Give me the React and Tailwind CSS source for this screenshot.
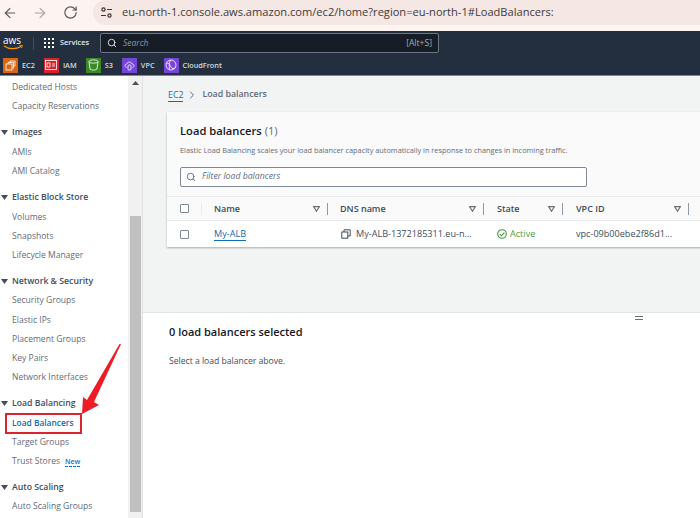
import React from "react";
import { ArrowLeft, ArrowRight, RotateCw, Search, ChevronRight } from "lucide-react";

function SideItem({ children }) {
  return <div className="h-[19.1px] leading-[19.1px] pl-3 text-[8.55px] text-[#5f6b7a] whitespace-nowrap">{children}</div>;
}
function SideHead({ children }) {
  return (
    <div className="flex items-center h-[20.6px] mt-[6px] text-[8.7px] font-semibold text-[#414d5c] whitespace-nowrap">
      <svg width="7" height="5" viewBox="0 0 7 5" className="ml-[1px] mr-[4px]"><path d="M0 0h7L3.5 5z" fill="#414d5c" /></svg>
      {children}
    </div>
  );
}
function ServiceTile({ bg, label, icon }) {
  return (
    <div className="flex items-center gap-[4px]">
      <div className={`w-[15px] h-[15px] flex items-center justify-center ${bg}`}>{icon}</div>
      <span className="text-[7.3px] font-semibold text-[#d5dbdb]">{label}</span>
    </div>
  );
}
function Sort() {
  return <svg width="7" height="6" viewBox="0 0 7 6"><path d="M0.7 0.7h5.6L3.5 5.2z" fill="none" stroke="#687078" strokeWidth="1.2" /></svg>;
}
function HeadCell({ className, label }) {
  return (
    <div className={`flex items-center h-full shrink-0 ${className}`}>
      <span className="text-[9px] font-semibold text-[#414d5c]">{label}</span>
      <span className="ml-auto"><Sort /></span>
      <span className="ml-[7px] w-[1px] h-[12px] bg-[#8d99a8]" />
    </div>
  );
}
function Check() {
  return <span className="block w-[9px] h-[9px] rounded-[1px] border border-[#7d8998] bg-white" />;
}
function CopyGlyph() {
  return (
    <svg width="10" height="10" viewBox="0 0 10 10" fill="none" stroke="#414d5c" strokeWidth="1">
      <rect x="0.8" y="3" width="6" height="6.2" />
      <path d="M3 3V0.8h6.2V7H6.8" />
    </svg>
  );
}

export default function App() {
  return (
    <div className="relative w-[700px] h-[518px] overflow-hidden flex flex-col bg-white font-['Open_Sans','Noto_Sans',sans-serif]">
      {/* Browser bar */}
      <div className="h-[31px] shrink-0 bg-[#fdf4f1] flex items-start">
        <div className="flex items-center h-[25px] ml-[2px] gap-[14px] text-[#5b5552]">
          <ArrowLeft size={16} strokeWidth={1.7} />
          <ArrowRight size={16} strokeWidth={1.7} className="text-[#a8a3a0]" />
          <RotateCw size={15} strokeWidth={1.9} className="ml-[1px]" />
        </div>
        <div className="h-[25px] flex-1 ml-[15px] bg-[#f4e7e4] rounded-l-[13px] flex items-center pl-[7px]">
          <svg width="13" height="13" viewBox="0 0 13 13" fill="none" stroke="#3c3735" strokeWidth="1.2">
            <circle cx="3.5" cy="3.5" r="1.6" /><path d="M7 3.5h5M1 9.5h5" /><circle cx="9.5" cy="9.5" r="1.6" />
          </svg>
          <span className="ml-[9px] text-[11.1px] text-[#3f3a38] whitespace-nowrap">eu-north-1.console.aws.amazon.com/ec2/home?region=eu-north-1#LoadBalancers:</span>
        </div>
      </div>

      {/* AWS nav */}
      <div className="h-[45px] shrink-0 bg-[#232f3e] border-b border-b-[#7d8998] flex flex-col">
        <div className="h-[24px] flex items-center">
          <div className="relative w-[20px] ml-[3px] h-[17px]">
            <span className="block text-[10px] leading-[10px] text-white">aws</span>
            <svg width="20" height="5" viewBox="0 0 20 5" className="absolute left-0 top-[10px]"><path d="M1 1c5 3.5 12 3.5 17 .5" fill="none" stroke="#f90" strokeWidth="1.2" /><path d="M16.5 0.5l3-.2-1 2.7" fill="none" stroke="#f90" strokeWidth="0.9" /></svg>
          </div>
          <span className="ml-[10px] w-[1px] h-[13px] bg-[#414d5c]" />
          <div className="ml-[10px] grid grid-cols-3 gap-[1.5px] w-[10px]">
            {Array.from({ length: 9 }).map((_, i) => <span key={i} className="w-[2.4px] h-[2.4px] bg-white" />)}
          </div>
          <span className="ml-[6px] text-[7.4px] font-semibold text-[#e5e9ea]">Services</span>
          <div className="ml-[11px] w-[339px] h-[20px] bg-[#161d26] border border-[#6b7683] rounded-[2px] flex items-center px-[6px]">
            <Search size={10} strokeWidth={2.4} className="text-[#d5dbdb]" />
            <span className="ml-[6px] text-[8.5px] italic text-[#8d99a8]">Search</span>
            <span className="ml-auto text-[8.6px] text-[#a3adb5]">[Alt+S]</span>
          </div>
        </div>
        <div className="flex-1 flex items-center pl-[3px] gap-[9px]">
          <ServiceTile bg="bg-[#d86613]" label="EC2" icon={
            <svg width="11" height="11" viewBox="0 0 11 11" fill="none" stroke="#fff" strokeWidth="0.8"><rect x="1" y="4" width="6" height="6" /><path d="M3 4V2.5h5.500V8H7M5 2.500V1h5v5H8.500" /></svg>
          } />
          <ServiceTile bg="bg-[#d6242d]" label="IAM" icon={
            <svg width="12" height="10" viewBox="0 0 12 10" fill="none" stroke="#fff" strokeWidth="0.8"><rect x="0.5" y="0.5" width="11" height="9" /><rect x="2" y="3" width="3" height="4" /><path d="M7 4h3M7 6h3" /></svg>
          } />
          <ServiceTile bg="bg-[#3a8a28]" label="S3" icon={
            <svg width="11" height="12" viewBox="0 0 11 12" fill="none" stroke="#fff" strokeWidth="0.8"><ellipse cx="5.500" cy="2.500" rx="4.500" ry="1.700" /><path d="M1 2.500l1 7.500c1 1.400 6 1.400 7 0l1-7.500" /></svg>
          } />
          <ServiceTile bg="bg-[#7545d8]" label="VPC" icon={
            <svg width="11" height="11" viewBox="0 0 11 11" fill="none" stroke="#fff" strokeWidth="0.8"><path d="M2.500 7.500C0.500 7 0.500 4 2.800 4 3.200 1.500 7.500 1.500 8 4c2.500 0 2.500 3 .5 3.500" /><rect x="4" y="5" width="3" height="5" rx="1" /></svg>
          } />
          <ServiceTile bg="bg-[#7545d8]" label="CloudFront" icon={
            <svg width="12" height="12" viewBox="0 0 12 12" fill="none" stroke="#fff" strokeWidth="0.8"><circle cx="6" cy="6" r="5" /><path d="M1.500 4.500C4 3.500 5 6 6 8s3 2 4.500 .5M6 1C4 3 4 6 4.500 10.500" /></svg>
          } />
        </div>
      </div>

      <div className="flex-1 flex min-h-0">
        {/* Sidebar */}
        <div className="w-[128px] shrink-0 bg-white pt-[2px] overflow-hidden">
          <SideItem>Dedicated Hosts</SideItem>
          <SideItem>Capacity Reservations</SideItem>
          <SideHead>Images</SideHead>
          <SideItem>AMIs</SideItem>
          <SideItem>AMI Catalog</SideItem>
          <SideHead>Elastic Block Store</SideHead>
          <SideItem>Volumes</SideItem>
          <SideItem>Snapshots</SideItem>
          <SideItem>Lifecycle Manager</SideItem>
          <SideHead>Network &amp; Security</SideHead>
          <SideItem>Security Groups</SideItem>
          <SideItem>Elastic IPs</SideItem>
          <SideItem>Placement Groups</SideItem>
          <SideItem>Key Pairs</SideItem>
          <SideItem>Network Interfaces</SideItem>
          <SideHead>Load Balancing</SideHead>
          <div className="relative h-[19.1px] leading-[18px] pl-3 text-[8.4px] font-semibold text-[#0f6cb5] whitespace-nowrap">
            Load Balancers
            <span className="absolute left-[5px] top-[-1px] w-[77px] h-[21px] border-2 border-[#dc2430]" />
          </div>
          <SideItem>Target Groups</SideItem>
          <SideItem>
            Trust Stores
            <span className="ml-[5px] text-[7px] font-semibold text-[#0972d3] border-b border-dashed border-[#0972d3]">New</span>
          </SideItem>
          <SideHead>Auto Scaling</SideHead>
          <SideItem>Auto Scaling Groups</SideItem>
        </div>

        {/* Scrollbar */}
        <div className="w-[14px] shrink-0 bg-[#f1f1f1] flex flex-col items-center">
          <svg width="7" height="4" viewBox="0 0 7 4" className="mt-[5px]"><path d="M3.5 0L7 4H0z" fill="#505050" /></svg>
          <div className="mt-[131px] ml-[1px] w-[11px] h-[296px] bg-[#c0c0c0]" />
        </div>

        {/* Main */}
        <div className="flex-1 min-w-0 flex flex-col border-l border-l-[#dfe2e4]">
          <div className="h-[237px] shrink-0 bg-[#f2f3f3] overflow-hidden border-b border-b-[#e1e4e5]">
            <div className="h-[36px] flex items-center pl-[24px] pt-[2px] text-[8.8px]">
              <span className="ml-[1px] text-[#0f6cb5] border-b border-[#0f6cb5] leading-[12px]">EC2</span>
              <ChevronRight size={12} className="mx-[3px] text-[#5f6b7a]" />
              <span className="ml-[1px] font-semibold text-[#5f6b7a]">Load balancers</span>
            </div>
            <div className="ml-[24px] w-[560px] h-[135px] bg-white shadow-[0_1px_2px_rgba(0,0,0,0.3)]">
              <div className="h-[85px] bg-[#fafafa] pl-[13px] pt-[11px] border-b border-b-[#e9ebed]">
                <div className="text-[11.2px] leading-[15px] font-semibold text-[#16191f]">Load balancers <span className="font-normal text-[#5f6b7a]">(1)</span></div>
                <div className="mt-[7px] text-[7.35px] leading-[10px] text-[#5f6b7a] whitespace-nowrap">Elastic Load Balancing scales your load balancer capacity automatically in response to changes in incoming traffic.</div>
                <div className="mt-[12px] w-[407px] h-[20px] bg-white border border-[#7d8998] rounded-[2px] flex items-center pl-[5px]">
                  <Search size={10} strokeWidth={2.2} className="text-[#5f6b7a]" />
                  <span className="ml-[6px] text-[8.7px] italic text-[#5f6b7a]">Filter load balancers</span>
                </div>
              </div>
              <div className="h-[24px] bg-[#fafafa] flex items-center border-b border-b-[#e9ebed] pl-[13px]">
                <Check />
                <span className="ml-[12px] w-[1px] h-[12px] bg-[#e9ebed]" />
                <HeadCell className="ml-[12px] w-[114px]" label="Name" />
                <HeadCell className="ml-[12px] w-[144px]" label="DNS name" />
                <HeadCell className="ml-[13px] w-[66px]" label="State" />
                <HeadCell className="ml-[13px] w-[113px]" label="VPC ID" />
              </div>
              <div className="h-[26px] flex items-center pl-[13px] text-[9.1px] text-[#414d5c]">
                <Check />
                <span className="ml-[25px] w-[127px] text-[#0f6cb5] leading-[12px]"><span className="border-b border-[#0f6cb5]">My-ALB</span></span>
                <CopyGlyph />
                <span className="ml-[5px] w-[141px] whitespace-nowrap">My-ALB-1372185311.eu-n...</span>
                <svg width="10" height="10" viewBox="0 0 10 10" fill="none" stroke="#3f9a3a" strokeWidth="1.1"><circle cx="5" cy="5" r="4.3" /><path d="M2.8 5.2l1.6 1.6 3-3.2" /></svg>
                <span className="ml-[3px] w-[66px] text-[#5c9a46]">Active</span>
                <span className="whitespace-nowrap">vpc-09b00ebe2f86d1...</span>
              </div>
            </div>
          </div>
          <div className="relative flex-1 bg-white pl-[26px] pt-[11px]">
            <div className="text-[11px] leading-[15px] font-semibold text-[#16191f]">0 load balancers selected</div>
            <div className="mt-[16px] text-[8.6px] leading-[12px] text-[#414d5c]">Select a load balancer above.</div>
            <span className="absolute left-[492px] top-[3px] w-[8px] h-[4px] border-y border-y-[#687078]" />
          </div>
        </div>
      </div>

      {/* Red annotation arrow */}
      <svg className="absolute left-0 top-0 pointer-events-none" width="700" height="518" viewBox="0 0 700 518">
        <path d="M121 344L94 402l5 3-17 9 1-17 4 3L119.500 344z" fill="#ee1c25" />
      </svg>
    </div>
  );
}
